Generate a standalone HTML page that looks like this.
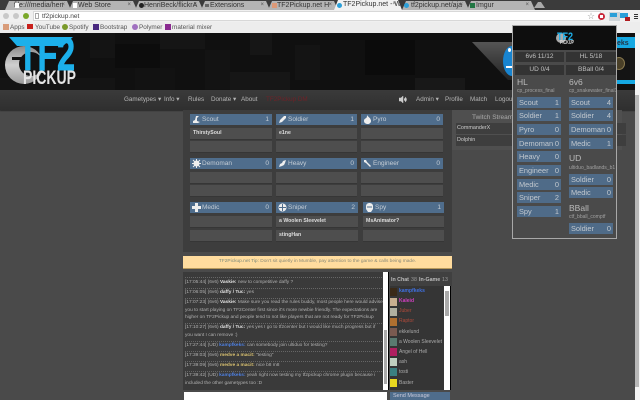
<!DOCTYPE html>
<html><head><meta charset="utf-8"><style>
html,body{margin:0;padding:0;width:640px;height:400px;overflow:hidden;background:#4a4a4a;font-family:"Liberation Sans",sans-serif}
div,span,svg{position:absolute;white-space:nowrap}
b span,i span{position:static}
.w{left:0;top:0;width:640px;height:400px;overflow:hidden;filter:blur(.35px)}
.tab{top:1px;height:9px;background:#b4b4b4;clip-path:polygon(0 100%,4px 0,calc(100% - 4px) 0,100% 100%);font-size:7px;line-height:9px;color:#333}
.tab span{left:9px;top:0}
.tab em{position:absolute;right:6px;top:0;font-style:normal;font-size:6px;color:#555}
.bm{top:23px;font-size:6.4px;line-height:9px;color:#555}
.ic{top:24px;width:6px;height:6px}
.t{background:#111}
.n{top:95px;font-size:6.3px;line-height:9px;color:#b5b5b5}
.h{height:11px;background:#4f6d8c;color:#c4ccd4;font-size:6.5px;line-height:11px}
.h span{left:12px;top:0}
.h em{position:absolute;right:3px;top:0;font-style:normal}
.h svg{left:2px;top:1px}
.s{height:11px;background:#4e4e4e;color:#ddd;font-size:5.2px;font-weight:bold;line-height:11px;text-indent:3px;box-shadow:0 1px 0 #363636}
.c{left:185px;font-size:4.8px;line-height:8px;color:#b0b0b0;width:198px}
.c b{color:#e2e2e2}.c u{text-decoration:none;color:#4d7fe0;font-weight:bold}
.d{left:185px;width:197px;border-top:1px dotted #666;height:0}
.av{left:390px;width:7px;height:8px}
.nm{left:399px;font-size:5px;line-height:8px;color:#aaa}
.p{height:11px;background:#4f6b88;color:#c2c8ce;font-size:7.4px;line-height:11px;text-indent:2px}
.p em{position:absolute;right:2px;top:0;font-style:normal;text-indent:0}
.l{width:44px}.r{width:44px}
.g{background:#333;height:10px;color:#c0c0c0;font-size:6.5px;line-height:10px;text-align:center}
.k{color:#bbb;font-size:8.5px;line-height:9px}
.mp{color:#a0a0a0;font-size:5px;line-height:6px}
</style></head><body>
<div class="w">

<!-- tab strip -->
<div style="left:0;top:0;width:640px;height:10px;background:#3b3b3b"></div>
<div class="tab" style="left:5px;width:66px"><span>file:///media/hen</span><em>×</em></div>
<div class="tab" style="left:69px;width:68px"><span>Web Store</span><em>×</em></div>
<div class="tab" style="left:135px;width:68px"><span>HenriBeck/flickrA</span><em>×</em></div>
<div class="tab" style="left:201px;width:69px"><span>Extensions</span><em>×</em></div>
<div class="tab" style="left:268px;width:70px"><span>TF2Pickup.net H</span><em>×</em></div>
<div class="tab" style="left:402px;width:67px"><span>tf2pickup.net/aja</span><em>×</em></div>
<div class="tab" style="left:467px;width:68px"><span>Imgur</span><em>×</em></div>
<div class="tab" style="left:534px;width:11px;top:2px;height:6px;background:#aaa"></div>
<div class="tab" style="left:334px;width:68px;top:0;height:10px;background:#f1f1f1"><span>TF2Pickup.net - W</span><em>×</em></div>
<div style="left:15px;top:3px;width:4px;height:5px;background:#fff"></div>
<div style="left:73px;top:3px;width:4px;height:5px;background:#fff"></div>
<div style="left:139px;top:3px;width:5px;height:5px;border-radius:50%;background:#222"></div>
<div style="left:205px;top:4px;width:4px;height:3px;background:#666"></div>
<div style="left:272px;top:3px;width:5px;height:5px;background:#d97"></div>
<div style="left:337px;top:3px;width:5px;height:5px;border-radius:50%;background:#2b9fd8"></div>
<div style="left:404px;top:3px;width:5px;height:5px;border-radius:50%;background:#2b9fd8"></div>
<div style="left:470px;top:3px;width:5px;height:5px;background:#274"></div>

<!-- toolbar -->
<div style="left:0;top:10px;width:640px;height:12px;background:#f0f0f0"></div>
<div style="left:33px;top:11px;width:568px;height:10px;background:#fff;border:1px solid #d8d8d8;box-sizing:border-box"></div>
<div style="left:3px;top:13px;width:6px;height:6px;border-radius:50%;background:#c8c8c8"></div>
<div style="left:13px;top:13px;width:6px;height:6px;border-radius:50%;background:#c8c8c8"></div>
<div style="left:23px;top:13px;width:6px;height:6px;border-radius:50%;background:#7aa82a"></div>
<div style="left:42px;top:12px;font-size:6.6px;line-height:9px;color:#444">tf2pickup.net</div>
<div style="left:35px;top:13px;width:4px;height:6px;background:#fff;border:1px solid #aaa;box-sizing:border-box"></div>
<div style="left:587px;top:11px;font-size:9px;line-height:10px;color:#999">☆</div>
<div style="left:598px;top:13px;width:7px;height:7px;border-radius:50%;background:#c9273a"></div>
<div style="left:600px;top:15px;width:3px;height:3px;background:#fff"></div>
<div style="left:609px;top:12px;width:11px;height:9px;background:#cfd5d9"></div>
<div style="left:610px;top:13px;width:7px;height:4px;background:#2b9fd8"></div>
<div style="left:620px;top:13px;width:8px;height:5px;background:#2b9fd8"></div>
<div style="left:625px;top:17px;width:5px;height:4px;background:#b01c20"></div>
<div style="left:634px;top:14px;width:4px;height:1px;background:#333;box-shadow:0 2px #333,0 4px #333"></div>

<!-- bookmarks -->
<div style="left:0;top:22px;width:640px;height:11px;background:#ededed"></div>
<div class="ic" style="left:3px;background:#d99c7a"></div><div class="bm" style="left:10px">Apps</div>
<div class="ic" style="left:27px;background:#c8201c;height:5px;width:6px"></div><div class="bm" style="left:35px">YouTube</div>
<div class="ic" style="left:62px;background:#7a9a2a;border-radius:50%"></div><div class="bm" style="left:69px">Spotify</div>
<div class="ic" style="left:93px;background:#4a2a80"></div><div class="bm" style="left:100px">Bootstrap</div>
<div class="ic" style="left:132px;background:#a070c0;border-radius:50%"></div><div class="bm" style="left:139px">Polymer</div>
<div class="ic" style="left:165px;background:#8a2a90"></div><div class="bm" style="left:172px">material mixer</div>

<!-- header -->
<div style="left:0;top:33px;width:640px;height:57px;background:#101010"></div>
<div class="t" style="left:90px;top:33px;width:25px;height:25px;background:#141414"></div>
<div class="t" style="left:115px;top:44px;width:45px;height:24px;background:#0c0c0c"></div>
<div class="t" style="left:160px;top:33px;width:45px;height:16px;background:#151515"></div>
<div class="t" style="left:205px;top:50px;width:25px;height:40px;background:#131313"></div>
<div class="t" style="left:250px;top:33px;width:22px;height:22px;background:#161616"></div>
<div class="t" style="left:295px;top:45px;width:25px;height:35px;background:#141414"></div>
<div class="t" style="left:365px;top:40px;width:50px;height:35px;background:#0b0b0b"></div>
<div class="t" style="left:415px;top:78px;width:50px;height:12px;background:#181818"></div>
<div class="t" style="left:0;top:78px;width:115px;height:12px;background:#141414"></div>
<div class="t" style="left:230px;top:72px;width:60px;height:18px;background:#161616"></div>
<div class="t" style="left:135px;top:68px;width:40px;height:22px;background:#121212"></div>

<!-- header right promo -->
<svg style="left:470px;top:40px" width="50" height="50"><defs><linearGradient id="a" x1="0" y1="0" x2="0" y2="1"><stop offset="0" stop-color="#555"/><stop offset="1" stop-color="#222"/></linearGradient></defs><polygon points="2,2 50,2 50,40 38,40" fill="url(#a)"/></svg>
<div style="left:503px;top:46px;width:18px;height:30px;border-radius:50%;background:#1884d0"></div>
<div style="left:508px;top:48px;width:3px;height:4px;border-radius:50%;background:#fff"></div>
<div style="left:506px;top:66px;width:6px;height:2px;background:#fff"></div>
<div style="left:610px;top:37px;width:25px;height:47px;background:#15a8e2"></div>
<div style="left:617px;top:39px;font-size:7px;line-height:9px;font-weight:bold;color:#234">eks</div>
<div style="left:612px;top:48px;width:23px;height:32px;background:#141414"></div>
<div style="left:613px;top:57px;width:12px;height:13px;border-radius:50%;background:#4a4028;border:1px solid #8a7a50;box-sizing:border-box"></div>

<!-- logo -->
<svg style="left:0;top:33px" width="85" height="57">
<defs><linearGradient id="cr" x1="0" y1="0" x2="0" y2="1"><stop offset="0" stop-color="#8a8a8a"/><stop offset=".5" stop-color="#d0d0d0"/><stop offset="1" stop-color="#9a9a9a"/></linearGradient></defs>
<circle cx="24" cy="32" r="19" fill="url(#cr)"/>
<circle cx="31" cy="31" r="12" fill="#111"/>
<rect x="12" y="24" width="32" height="3" fill="#111"/>
<polygon points="9,4 73,4 63,13 17,13" fill="#1cb0ea"/>
<text x="18" y="37" font-family="Liberation Sans" font-weight="bold" font-size="46" fill="#1cb0ea" stroke="#1cb0ea" stroke-width="1" textLength="57" lengthAdjust="spacingAndGlyphs">TF2</text>
<text x="23" y="51" font-family="Liberation Sans" font-weight="bold" font-size="19" fill="#e4e4e4" textLength="53" lengthAdjust="spacingAndGlyphs">PICKUP</text>
</svg>

<!-- nav -->
<div style="left:0;top:90px;width:640px;height:20px;background:linear-gradient(#3a3a3a,#2f2f2f);box-shadow:0 1px 1px #2a2a2a"></div>
<div class="n" style="left:124px">Gametypes ▾</div>
<div class="n" style="left:164px">Info ▾</div>
<div class="n" style="left:188px">Rules</div>
<div class="n" style="left:211px">Donate ▾</div>
<div class="n" style="left:241px">About</div>
<div class="n" style="left:266px;color:#6e2228">TF2Pickup DM</div>
<svg style="left:399px;top:96px" width="8" height="7"><path d="M0 2h2l2-2v7l-2-2H0zM5 2c1 1 1 2 0 3M6 1c2 1 2 4 0 5" fill="#ccc" stroke="#ccc" stroke-width=".5"/></svg>
<div class="n" style="left:416px">Admin ▾</div>
<div class="n" style="left:445px">Profile</div>
<div class="n" style="left:470px">Match</div>
<div class="n" style="left:495px">Logout</div>

<!-- twitch panel -->
<div style="left:452px;top:110px;width:170px;height:40px;background:#4f4f4f"></div>
<div style="left:472px;top:113px;font-size:6.5px;line-height:9px;color:#aaa">Twitch Streams</div>
<div style="left:456px;top:123px;width:170px;height:11px;background:#3e3e3e;font-size:5.4px;line-height:11px;color:#ccc;text-indent:1px">CommanderX</div>
<div style="left:456px;top:135px;width:170px;height:11px;background:#3e3e3e;font-size:5.4px;line-height:11px;color:#ccc;text-indent:1px">Dolphin</div>

<!-- class panel -->
<div style="left:183px;top:110px;width:269px;height:142px;background:#3d3d3d"></div>

<div class="h" style="left:190px;top:114px;width:82px"><svg width="9" height="9"><path d="M1 8h5l2-1-3-1V3l2-2H4L3 5 1 6z" fill="#eee"/></svg><span>Scout</span><em>1</em></div>
<div class="s" style="left:190px;top:128px;width:82px">ThirstySoul</div><div class="s" style="left:190px;top:141px;width:82px"></div>
<div class="h" style="left:276px;top:114px;width:81px"><svg width="9" height="9"><path d="M1 8l1-3 4-4h2v2L4 7z" fill="#eee"/></svg><span>Soldier</span><em>1</em></div>
<div class="s" style="left:276px;top:128px;width:81px">e1ne</div><div class="s" style="left:276px;top:141px;width:81px"></div>
<div class="h" style="left:361px;top:114px;width:82px"><svg width="9" height="9"><path d="M4 0c1 2 4 3 4 6 0 2-2 3-3 3-2 0-4-1-4-3 0-2 1-2 2-3 1 0 1-2 1-3z" fill="#eee"/></svg><span>Pyro</span><em>0</em></div>
<div class="s" style="left:361px;top:128px;width:82px"></div><div class="s" style="left:361px;top:141px;width:82px"></div>

<div class="h" style="left:190px;top:158px;width:82px"><svg width="9" height="9"><circle cx="4.500" cy="4.500" r="3" fill="#eee"/><path d="M4.500 0v9M0 4.500h9M1 1l7 7M8 1l-7 7" stroke="#eee"/></svg><span>Demoman</span><em>0</em></div>
<div class="s" style="left:190px;top:172px;width:82px"></div><div class="s" style="left:190px;top:185px;width:82px"></div>
<div class="h" style="left:276px;top:158px;width:81px"><svg width="9" height="9"><path d="M1 8l1-3 2-1 1-2 3-1-1 3-1 2-2 1z" fill="#eee"/></svg><span>Heavy</span><em>0</em></div>
<div class="s" style="left:276px;top:172px;width:81px"></div><div class="s" style="left:276px;top:185px;width:81px"></div>
<div class="h" style="left:361px;top:158px;width:82px"><svg width="9" height="9"><path d="M1 1l2 0 1 2 4 4-1 1-4-4-2-1z" fill="#eee"/></svg><span>Engineer</span><em>0</em></div>
<div class="s" style="left:361px;top:172px;width:82px"></div><div class="s" style="left:361px;top:185px;width:82px"></div>

<div class="h" style="left:190px;top:202px;width:82px"><svg width="9" height="9"><path d="M3 0h3v3h3v3H6v3H3V6H0V3h3z" fill="#eee"/></svg><span>Medic</span><em>0</em></div>
<div class="s" style="left:190px;top:216px;width:82px"></div><div class="s" style="left:190px;top:230px;width:82px"></div>
<div class="h" style="left:276px;top:202px;width:82px"><svg width="9" height="9"><circle cx="4.500" cy="4.500" r="4" fill="#eee"/><path d="M4.500 1v7M1 4.500h7" stroke="#4f6d8c"/></svg><span>Sniper</span><em>2</em></div>
<div class="s" style="left:276px;top:216px;width:82px">a Woolen Sleevelet</div><div class="s" style="left:276px;top:230px;width:82px">stingHan</div>
<div class="h" style="left:363px;top:202px;width:81px"><svg width="9" height="9"><path d="M1 3c0-2 2-3 3.500-3S8 1 8 3v3L6 9H3L1 6z" fill="#eee"/><path d="M2 4h5" stroke="#4f6d8c"/></svg><span>Spy</span><em>1</em></div>
<div class="s" style="left:363px;top:216px;width:81px">MsAnimator?</div><div class="s" style="left:363px;top:230px;width:81px"></div>

<!-- tip -->
<div style="left:183px;top:256px;width:269px;height:12px;background:#ffdc9e;box-shadow:0 1px 0 #b89a5c;text-align:center;font-size:4.8px;line-height:12px;color:#8a8a78"><b style="color:#7c8a7a;font-weight:normal">TF2Pickup.net Tip:</b> Don't sit quietly in Mumble, pay attention to the game &amp; calls being made.</div>

<!-- chat -->
<div style="left:183px;top:272px;width:200px;height:118px;background:#3a3a3a"></div>
<div class="d" style="top:277px"></div>
<div class="c" style="top:279px">[17:05:44] (6v6) <b>Vaskie:</b> new to competitive daffy ?</div>
<div class="d" style="top:288px"></div>
<div class="c" style="top:289px">[17:06:05] (6v6) <b>daffy / Tuc:</b> yes</div>
<div class="d" style="top:298px"></div>
<div class="c" style="top:299px">[17:07:23] (6v6) <b>Vaskie:</b> Make sure you read the rules buddy, most people here would advise</div>
<div class="c" style="top:307px">you to start playing on TF2Center first since it's more newbie friendly. The expectations are</div>
<div class="c" style="top:314px">higher on TF2Pickup and people tend to not like players that are not ready for TF2Pickup</div>
<div class="d" style="top:323px"></div>
<div class="c" style="top:324px">[17:10:27] (6v6) <b>daffy / Tuc:</b> yes yes I go to tf2center but I would like much progress but if</div>
<div class="c" style="top:332px">you want I can remove :)</div>
<div class="d" style="top:341px"></div>
<div class="c" style="top:342px">[17:27:44] (UD) <u>kampfkeks:</u> can somebody join ultiduo for testing?</div>
<div class="d" style="top:351px"></div>
<div class="c" style="top:352px">[17:39:03] (6v6) <b style="color:#d8c070">medve a macit:</b> "testing"</div>
<div class="d" style="top:361px"></div>
<div class="c" style="top:362px">[17:39:09] (6v6) <b style="color:#d8c070">medve a macit:</b> nice b8 m8</div>
<div class="d" style="top:371px"></div>
<div class="c" style="top:372px">[17:39:42] (UD) <u>kampfkeks:</u> yeah right now testing my tf2pickup chrome plugin because i</div>
<div class="c" style="top:380px">included the other gametypes too :D</div>
<div style="left:383px;top:272px;width:5px;height:118px;background:#fff;box-shadow:1px 0 0 #000"></div>
<div style="left:384px;top:330px;width:3px;height:54px;background:#aaa"></div>
<div style="left:184px;top:392px;width:203px;height:8px;background:#fff"></div>

<!-- sidebar -->
<div style="left:390px;top:272px;width:62px;height:14px;background:#404040"></div>
<div style="left:391px;top:276px;font-size:5.3px;font-weight:bold;line-height:8px;color:#bbb">In Chat</div>
<div style="left:411px;top:276px;font-size:5.300px;line-height:8px;color:#999">38</div>
<div style="left:419px;top:276px;font-size:5.3px;font-weight:bold;line-height:8px;color:#bbb">In-Game</div>
<div style="left:442px;top:276px;font-size:5.300px;line-height:8px;color:#999">13</div>
<div style="left:390px;top:286px;width:54px;height:104px;background:#353535"></div>
<div style="left:444px;top:286px;width:6px;height:104px;background:#fff;box-shadow:1px 0 0 #000"></div>
<div style="left:445px;top:291px;width:4px;height:25px;background:#aaa"></div>

<div class="av" style="top:288px;background:#3a2a18"></div><div class="nm" style="top:287px;color:#3f70e0;font-weight:bold">kampfkeks</div>
<div class="av" style="top:298px;background:#c8b090"></div><div class="nm" style="top:297px;color:#d040c0;font-weight:bold">Kaleid</div>
<div class="av" style="top:308px;background:#b0b0a0"></div><div class="nm" style="top:307px;color:#b04a3a">Juber</div>
<div class="av" style="top:318px;background:#b07030"></div><div class="nm" style="top:317px;color:#b04a3a">Raptor</div>
<div class="av" style="top:328px;background:#7a5a50"></div><div class="nm" style="top:328px">ekkelund</div>
<div class="av" style="top:338px;background:#5a7a70"></div><div class="nm" style="top:338px">a Woolen Sleevelet</div>
<div class="av" style="top:348px;background:#b02060"></div><div class="nm" style="top:348px">Angel of Hell</div>
<div class="av" style="top:358px;background:#c0d0c0"></div><div class="nm" style="top:358px">ash</div>
<div class="av" style="top:368px;background:#3a8080"></div><div class="nm" style="top:368px">tosti</div>
<div class="av" style="top:379px;background:#e8d820"></div><div class="nm" style="top:379px">Baster</div>
<div style="left:390px;top:392px;width:60px;height:8px;background:#4f6d8c;font-size:5.5px;line-height:9px;color:#ccd;text-indent:3px">Send Message</div>

<!-- page scrollbar -->
<div style="left:635px;top:33px;width:5px;height:367px;background:#f4f4f4"></div>
<div style="left:635px;top:95px;width:4px;height:292px;background:#b8b8b8"></div>

<!-- popup -->
<div style="left:512px;top:25px;width:105px;height:214px;background:#4a4a4a;border:1px solid #a8a8a8;box-sizing:border-box"></div>
<div style="left:513px;top:26px;width:103px;height:24px;background:#0e0e0e"></div>
<svg style="left:554px;top:29px" width="22" height="17"><circle cx="7" cy="9" r="5" fill="#aaa"/><text x="3" y="11" font-family="Liberation Sans" font-weight="bold" font-size="11" fill="#1cb0ea" textLength="16" lengthAdjust="spacingAndGlyphs">TF2</text><text x="6" y="15" font-family="Liberation Sans" font-weight="bold" font-size="5" fill="#ddd" textLength="14" lengthAdjust="spacingAndGlyphs">PICKUP</text></svg>

<div class="g" style="left:515px;top:52px;width:49px">6v6 11/12</div>
<div class="g" style="left:566px;top:52px;width:50px">HL 5/18</div>
<div class="g" style="left:515px;top:65px;width:49px">UD 0/4</div>
<div class="g" style="left:566px;top:65px;width:50px">BBall 0/4</div>

<div class="k" style="left:517px;top:78px">HL</div>
<div class="mp" style="left:517px;top:88px">cp_process_final</div>
<div class="p l" style="left:517px;top:97px">Scout<em>1</em></div>
<div class="p l" style="left:517px;top:110px">Soldier<em>1</em></div>
<div class="p l" style="left:517px;top:124px">Pyro<em>0</em></div>
<div class="p l" style="left:517px;top:138px">Demoman<em>0</em></div>
<div class="p l" style="left:517px;top:151px">Heavy<em>0</em></div>
<div class="p l" style="left:517px;top:165px">Engineer<em>0</em></div>
<div class="p l" style="left:517px;top:179px">Medic<em>0</em></div>
<div class="p l" style="left:517px;top:192px">Sniper<em>2</em></div>
<div class="p l" style="left:517px;top:206px">Spy<em>1</em></div>

<div class="k" style="left:569px;top:78px">6v6</div>
<div class="mp" style="left:569px;top:88px;width:47px;overflow:hidden">cp_snakewater_final1</div>
<div class="p r" style="left:569px;top:97px">Scout<em>4</em></div>
<div class="p r" style="left:569px;top:110px">Soldier<em>4</em></div>
<div class="p r" style="left:569px;top:124px">Demoman<em>0</em></div>
<div class="p r" style="left:569px;top:138px">Medic<em>1</em></div>
<div class="k" style="left:569px;top:154px">UD</div>
<div class="mp" style="left:569px;top:165px">ultiduo_badlands_b1</div>
<div class="p r" style="left:569px;top:174px">Soldier<em>0</em></div>
<div class="p r" style="left:569px;top:187px">Medic<em>0</em></div>
<div class="k" style="left:569px;top:204px">BBall</div>
<div class="mp" style="left:569px;top:214px">ctf_bball_comptf</div>
<div class="p r" style="left:569px;top:223px">Soldier<em>0</em></div>
</div>
</body></html>
